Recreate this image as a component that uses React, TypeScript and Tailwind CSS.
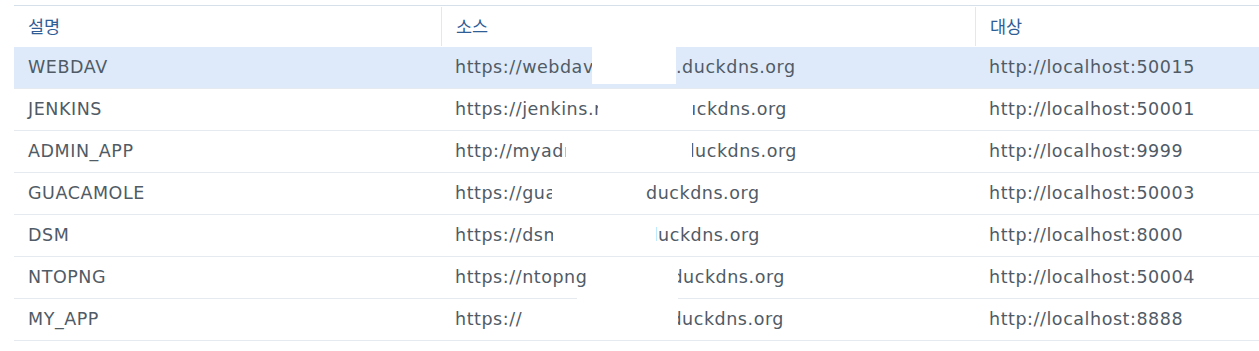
import React from "react";

type Row = {
  name: string;
  pre: string;
  preEnd: number;
  suf: string;
  sufStart: number;
  sufEnd: number;
  left?: boolean;
  target: string;
};

const rows: Row[] = [
  { name: "WEBDAV", pre: "https://webdav", preEnd: 592, suf: ".duckdns.org", sufStart: 676, sufEnd: 800, left: true, target: "http://localhost:50015" },
  { name: "JENKINS", pre: "https://jenkins.m", preEnd: 598, suf: "duckdns.org", sufStart: 693, sufEnd: 787, target: "http://localhost:50001" },
  { name: "ADMIN_APP", pre: "http://myadm", preEnd: 566, suf: "duckdns.org", sufStart: 692, sufEnd: 797, target: "http://localhost:9999" },
  { name: "GUACAMOLE", pre: "https://gua", preEnd: 552, suf: "duckdns.org", sufStart: 646, sufEnd: 770, left: true, target: "http://localhost:50003" },
  { name: "DSM", pre: "https://dsm", preEnd: 553, suf: "duckdns.org", sufStart: 656, sufEnd: 760, target: "http://localhost:8000" },
  { name: "NTOPNG", pre: "https://ntopng", preEnd: 586, suf: "duckdns.org", sufStart: 678, sufEnd: 785, target: "http://localhost:50004" },
  { name: "MY_APP", pre: "https://m", preEnd: 523, suf: "duckdns.org", sufStart: 678, sufEnd: 784, target: "http://localhost:8888" },
];

const COL2_X = 441;
const TEXT_X = 455;

export default function App() {
  return (
    <div
      className="w-[1259px] h-[351px] bg-white overflow-hidden pt-[5px] pl-[14px]"
      style={{ fontFamily: "'DejaVu Sans', 'Noto Sans CJK KR', sans-serif" }}
    >
      <div className="w-[1245px] text-[17.5px]">
        {/* header */}
        <div className="flex h-[42px] border-t border-[#d6e0eb] text-[#2f5d96]" style={{ fontFamily: "'Noto Sans CJK KR', 'DejaVu Sans', sans-serif" }}>
          <div className="w-[427px] flex items-center pl-[14px] pb-[1px]">설명</div>
          <div className="w-[534px] flex items-center pl-[14px] pb-[1px] border-l border-[#e2e8ef] my-[1px]">소스</div>
          <div className="flex-1 flex items-center pl-[14px] pb-[1px] border-l border-[#e2e8ef] my-[1px]">대상</div>
        </div>
        {rows.map((r, i) => (
          <div
            key={r.name}
            className={
              "flex h-[42px] border-b border-[#e4eaf0] text-[#505b66] tracking-[0.55px] " +
              (i === 0 ? "bg-[#deeafa]" : "")
            }
          >
            <div className="w-[427px] flex items-center pl-[14px] whitespace-nowrap">{r.name}</div>
            <div className="w-[534px] relative flex items-center pl-[14px] whitespace-nowrap">
              <div className="overflow-hidden shrink-0" style={{ width: r.preEnd - TEXT_X }}>
                {r.pre}
              </div>
              <div
                className={
                  "overflow-hidden shrink-0 flex " + (r.left ? "justify-start" : "justify-end")
                }
                style={{ marginLeft: r.sufStart - r.preEnd, width: r.sufEnd - r.sufStart }}
              >
                <span className="shrink-0">{r.suf}</span>
              </div>
              {i === 0 && (
                <div
                  className="absolute bg-white top-[0px] h-[37px]"
                  style={{ left: 592 - COL2_X, width: 676 - 592 }}
                />
              )}
              {i === 6 && (
                <div
                  className="absolute bg-white top-[-1px] h-[20px]"
                  style={{ left: 577 - COL2_X, width: 678 - 577 }}
                />
              )}
            </div>
            <div className="flex-1 flex items-center pl-[14px] whitespace-nowrap">{r.target}</div>
          </div>
        ))}
      </div>
    </div>
  );
}
